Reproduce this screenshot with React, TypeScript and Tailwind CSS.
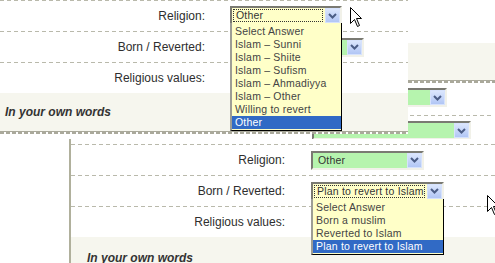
const ui = "font-['Liberation_Sans',Arial,sans-serif]";

function Dash({ className = "" }: { className?: string }) {
  return (
    <div
      className={`h-px bg-[repeating-linear-gradient(90deg,#b9b9ab_0_4px,transparent_4px_7px)] ${className}`}
    />
  );
}

function ThickRule() {
  return (
    <div>
      <div className="h-px bg-[#aaa99b]" />
      <div className="h-[2px] bg-[repeating-linear-gradient(90deg,#aaa99b_0_4px,transparent_4px_6px)]" />
    </div>
  );
}

function ArrowButton() {
  return (
    <div className="flex h-[15px] w-[15px] shrink-0 items-center justify-center border border-[#d6e2fc] bg-[linear-gradient(#dbe6fd,#b1c6f5)]">
      <svg width="9" height="6" viewBox="0 0 9 6">
        <path d="M1 1 L4.5 4.5 L8 1" fill="none" stroke="#4b5d86" strokeWidth="2" />
      </svg>
    </div>
  );
}

interface SelectProps {
  value?: string;
  className: string;
  focused?: boolean;
  options?: string[];
  selected?: string;
}

function Select({ value = "", className, focused = false, options, selected }: SelectProps) {
  return (
    <div
      className={`relative flex h-[19px] shrink-0 border-2 border-[#f1f1e9] border-l-[#7a7a72] border-t-[#7a7a72] ${
        focused ? "bg-[#ffffc8]" : "bg-[#b6f4ae]"
      } ${className}`}
    >
      <div className="flex min-w-0 flex-1 items-center">
        {focused ? (
          <div className="ml-px mr-[2px] flex h-[13px] flex-1 items-center border border-dotted border-[#333] pl-[2px] text-[10.5px] leading-none tracking-[0.2px] text-[#333]">
            {value}
          </div>
        ) : (
          <span className="pl-[5px] text-[10.5px] leading-none tracking-[0.2px] text-[#333]">{value}</span>
        )}
      </div>
      <ArrowButton />
      {options ? (
        <div className="absolute left-[-2px] right-[-2px] top-full z-10 border-b border-r border-black border-l-2 border-l-[#9d9d95] bg-[#ffffc8] pb-px pt-[2px]">
          {options.map((o) => (
            <div
              key={o}
              className={`h-[13px] pl-[3px] text-[10.5px] leading-[13px] tracking-[0.2px] ${
                o === selected ? "bg-[#316ac5] text-white" : "text-[#444]"
              }`}
            >
              {o}
            </div>
          ))}
        </div>
      ) : null}
    </div>
  );
}

function Cursor({ className }: { className: string }) {
  return (
    <svg className={`absolute ${className}`} width="13" height="21" viewBox="0 0 13 21">
      <path
        d="M0.5 0.5 L0.5 16.5 L4.5 12.5 L7.5 19.5 L9.5 18.5 L6.5 11.5 L11.5 11.5 Z"
        fill="#fff"
        stroke="#000"
        strokeWidth="1"
      />
    </svg>
  );
}

function Label({ text, className }: { text: string; className: string }) {
  return <div className={`shrink-0 text-right text-[12px] text-[#2e2e2e] ${className}`}>{text}</div>;
}

export default function App() {
  return (
    <div className={`relative h-[263px] w-[495px] overflow-hidden bg-white ${ui}`}>
      {/* back shot, mostly hidden */}
      <div className="absolute left-[312px] top-0 h-[139px] w-[183px] bg-white">
        <div className="h-[43px]" />
        <div className="h-[37px] bg-[#f6f6ee]" />
        <ThickRule />
        <div className="pt-[5px]">
          <Select className="w-[135px]" />
          <Dash className="ml-[98px] mr-[2px] mt-[8px]" />
          <Select className="mt-[5px] w-[159px]" />
        </div>
      </div>

      {/* upper shot */}
      <div className="absolute left-0 top-0 w-[408px] bg-white">
        <Dash />
        <div className="flex h-[30px] items-center pb-px">
          <Label text="Religion:" className="w-[205px]" />
          <Select
            value="Other"
            focused
            className="ml-[25px] w-[112px]"
            options={[
              "Select Answer",
              "Islam – Sunni",
              "Islam – Shiite",
              "Islam – Sufism",
              "Islam – Ahmadiyya",
              "Islam – Other",
              "Willing to revert",
              "Other",
            ]}
            selected="Other"
          />
        </div>
        <Dash />
        <div className="flex h-[30px] items-center">
          <Label text="Born / Reverted:" className="w-[205px]" />
          <Select className="ml-[25px] w-[134px]" />
        </div>
        <Dash />
        <div className="flex h-[30px] items-center">
          <Label text="Religious values:" className="w-[205px]" />
        </div>
        <div className="flex h-[38px] items-center bg-[#f6f6ee] pl-[5px] text-[12px] font-bold italic text-[#333]">
          In your own words
        </div>
        <ThickRule />
      </div>

      {/* lower shot */}
      <div className="absolute bottom-0 left-[69px] right-0 top-[139px] border-l-2 border-[#b0b09c] bg-white pt-[5px]">
        <Dash />
        <div className="flex h-[30px] items-center">
          <Label text="Religion:" className="w-[214px]" />
          <Select value="Other" className="ml-[26px] w-[113px]" />
        </div>
        <Dash />
        <div className="flex h-[30px] items-center">
          <Label text="Born / Reverted:" className="w-[214px]" />
          <Select
            value="Plan to revert to Islam"
            focused
            className="ml-[26px] w-[133px]"
            options={["Select Answer", "Born a muslim", "Reverted to Islam", "Plan to revert to Islam"]}
            selected="Plan to revert to Islam"
          />
        </div>
        <Dash />
        <div className="flex h-[30px] items-center">
          <Label text="Religious values:" className="w-[214px]" />
        </div>
        <div className="flex h-[38px] items-center bg-[#f6f6ee] pl-[16px] pt-[3px] text-[12px] font-bold italic text-[#333]">
          In your own words
        </div>
      </div>

      <Cursor className="left-[350px] top-[7px]" />
      <Cursor className="left-[487px] top-[195px]" />
    </div>
  );
}
